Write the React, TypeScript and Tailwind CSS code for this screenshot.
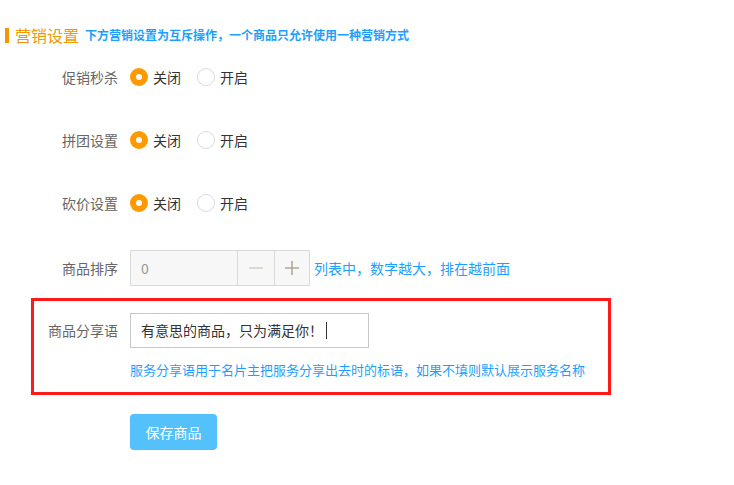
import React from 'react';

const font = { fontFamily: '"Noto Sans CJK SC", "Noto Sans", sans-serif' };

function Radio({ checked, label }: { checked?: boolean; label: string }) {
  return (
    <label className="flex items-center gap-[5px] text-[14px] text-[#333]">
      {checked ? (
        <span className="flex h-[18px] w-[18px] items-center justify-center rounded-full bg-[#ff9900]">
          <span className="h-[6px] w-[6px] rounded-full bg-white" />
        </span>
      ) : (
        <span className="h-[18px] w-[18px] rounded-full border border-[#dcdcdc] bg-white" />
      )}
      {label}
    </label>
  );
}

function RadioRow({ label, className }: { label: string; className?: string }) {
  return (
    <div className={`flex h-[36px] items-center ${className ?? ''}`}>
      <div className="w-[118px] text-right text-[14px] text-[#666]">{label}</div>
      <div className="ml-[12px] flex items-center gap-[16px]">
        <Radio checked label="关闭" />
        <Radio label="开启" />
      </div>
    </div>
  );
}

export default function App() {
  return (
    <div className="h-[485px] w-[734px] overflow-hidden bg-white pt-[25px]" style={font}>
      {/* Section title */}
      <div className="flex h-[20px] items-center">
        <span className="ml-[5px] h-[15px] w-[4px] bg-[#f39800]" />
        <span className="ml-[6px] text-[16px] text-[#f39800]">营销设置</span>
        <span className="ml-[6px] text-[12px] font-bold text-[#1e9fff]">
          下方营销设置为互斥操作，一个商品只允许使用一种营销方式
        </span>
      </div>

      <RadioRow label="促销秒杀" className="mt-[14px]" />
      <RadioRow label="拼团设置" className="mt-[27px]" />
      <RadioRow label="砍价设置" className="mt-[27px]" />

      {/* Sort */}
      <div className="mt-[29px] flex h-[36px] items-center">
        <div className="w-[118px] text-right text-[14px] text-[#666]">商品排序</div>
        <div className="ml-[12px] flex h-[36px] w-[180px] border border-[#d9d9d9] bg-[#f7f7f7]">
          <div className="flex flex-1 items-center pl-[10px] text-[14px] text-[#999]">0</div>
          <div className="flex w-[37px] items-center justify-center border-l border-[#d9d9d9]">
            <svg width="16" height="16" viewBox="0 0 16 16">
              <path d="M1 8h14" stroke="#d8d0c4" strokeWidth="1.6" />
            </svg>
          </div>
          <div className="flex w-[35px] items-center justify-center border-l border-[#d9d9d9]">
            <svg width="16" height="16" viewBox="0 0 16 16">
              <path d="M1 8h14M8 1v14" stroke="#b3a894" strokeWidth="1.6" />
            </svg>
          </div>
        </div>
        <span className="ml-[4px] text-[14px] text-[#1e9fff]">列表中，数字越大，排在越前面</span>
      </div>

      {/* Share text, highlighted */}
      <div className="ml-[31px] mt-[12px] w-[580px] border-[3px] border-[#ff1a1a] pb-[12px] pt-[12px]">
        <div className="flex h-[35px] items-center">
          <div className="w-[84px] text-right text-[14px] text-[#666]">商品分享语</div>
          <div className="ml-[12px] flex h-[35px] w-[239px] items-center border border-[#c8c8c8] pl-[10px] text-[14px] text-[#333]">
            有意思的商品，只为满足你！
            <span className="ml-[3px] h-[17px] w-px bg-[#333]" />
          </div>
        </div>
        <div className="ml-[96px] mt-[12px] h-[20px] text-[13px] leading-[20px] text-[#1e9fff]">
          服务分享语用于名片主把服务分享出去时的标语，如果不填则默认展示服务名称
        </div>
      </div>

      <button className="ml-[130px] mt-[19px] block h-[36px] w-[87px] rounded-[4px] bg-[#55c1fc] text-[14px] text-white">
        保存商品
      </button>
    </div>
  );
}
